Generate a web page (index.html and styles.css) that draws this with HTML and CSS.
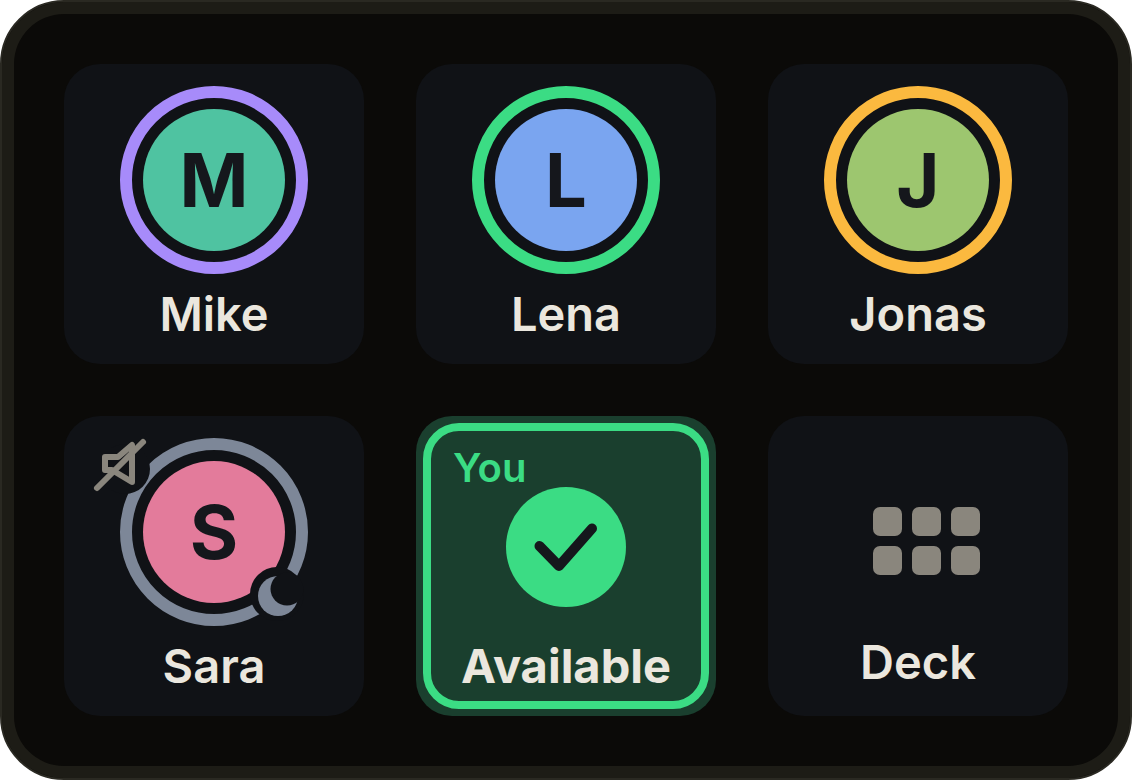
FILE: index.html
```html
<!DOCTYPE html>
<html lang="en">
<head>
    <meta charset="UTF-8">
    <title>Team Deck</title>
    <link rel="stylesheet" href="styles.css">
</head>
<body>
    <div class="frame">
        <div class="tile">
            <div class="avatar ring-purple"><div class="face face-mint">M</div></div>
            <div class="name">Mike</div>
        </div>
        <div class="tile">
            <div class="avatar ring-green"><div class="face face-blue">L</div></div>
            <div class="name">Lena</div>
        </div>
        <div class="tile">
            <div class="avatar ring-amber"><div class="face face-lime">J</div></div>
            <div class="name">Jonas</div>
        </div>
        <div class="tile">
            <div class="avatar ring-slate">
                <div class="face face-pink">S</div>
                <div class="badge-mute">
                    <svg class="mute-icon" width="50" height="50" viewBox="0 0 50 50">
                        <path class="mute-line" d="M5 13H18L32 1V38L12 26H5Z"/>
                        <path class="mute-line" d="M-3 44L43 -2"/>
                    </svg>
                </div>
                <div class="badge-moon">
                    <svg width="54" height="54" viewBox="0 0 54 54">
                        <circle class="moon-disc" cx="28" cy="29" r="20"/>
                        <circle class="moon-bite" cx="37" cy="22" r="16.500"/>
                    </svg>
                </div>
            </div>
            <div class="name">Sara</div>
        </div>
        <div class="tile tile-you">
            <div class="you">You</div>
            <div class="status">
                <svg width="120" height="120" viewBox="0 0 120 120">
                    <path class="check" d="M33.500 59L53 79L86 41.500"/>
                </svg>
            </div>
            <div class="name name-strong">Available</div>
        </div>
        <div class="tile tile-deck">
            <div class="dots">
                <span></span><span></span><span></span>
                <span></span><span></span><span></span>
            </div>
            <div class="name">Deck</div>
        </div>
    </div>
</body>
</html>
```

FILE: styles.css
```css
body {
    margin: 0;
    background-color: #fff;
    font-family: Inter, "Liberation Sans", sans-serif;
}

.frame {
    box-sizing: border-box;
    width: 1132px;
    height: 780px;
    padding: 62px;
    display: grid;
    grid-template-columns: repeat(3, 300px);
    grid-template-rows: repeat(2, 300px);
    gap: 52px;
    background-color: #0b0a08;
    border: 2px solid #2a2922;
    border-radius: 64px;
    box-shadow: inset 0 0 0 12px #1d1c16;
}

.tile {
    position: relative;
    display: flex;
    flex-direction: column;
    align-items: center;
    padding-top: 22px;
    background-color: #101216;
    border-radius: 36px;
}

.avatar {
    position: relative;
    box-sizing: border-box;
    width: 188px;
    height: 188px;
    padding: 11px;
    border: 12px solid;
    border-radius: 50%;
}

.ring-purple { border-color: #a78bfa; }
.ring-green { border-color: #3bdc84; }
.ring-amber { border-color: #fbb93f; }
.ring-slate { border-color: #7d8798; }

.face {
    width: 142px;
    height: 142px;
    border-radius: 50%;
    display: flex;
    align-items: center;
    justify-content: center;
    font-size: 74px;
    font-weight: 700;
    color: #15171c;
}

.face-mint { background-color: #4fc3a1; }
.face-blue { background-color: #7aa5f0; }
.face-lime { background-color: #9dc66f; }
.face-pink { background-color: #e37b9b; }

.name {
    margin-top: 11px;
    font-size: 47px;
    line-height: 58px;
    font-weight: 600;
    color: #ebe7de;
}

.badge-mute {
    position: absolute;
    left: -32px;
    top: -6px;
    width: 50px;
    height: 50px;
    border-radius: 50%;
    background-color: #101216;
}

.mute-icon {
    overflow: visible;
}

.mute-line {
    fill: none;
    stroke: #8a867d;
    stroke-width: 6;
    stroke-linecap: round;
    stroke-linejoin: round;
}

.badge-moon {
    position: absolute;
    left: 118px;
    top: 117px;
    width: 54px;
    height: 54px;
    border-radius: 50%;
    background-color: #101216;
}

.moon-disc { fill: #7d8798; }
.moon-bite { fill: #101216; }

.tile-you {
    background-color: #1a3f2e;
    padding-top: 71px;
}

.tile-you::before {
    content: "";
    position: absolute;
    inset: 7px;
    border: 8px solid #3bdc84;
    border-radius: 36px;
}

.you {
    position: absolute;
    left: 37px;
    top: 28px;
    font-size: 40px;
    line-height: 48px;
    font-weight: 600;
    color: #3bdc84;
}

.status {
    width: 120px;
    height: 120px;
    border-radius: 50%;
    background-color: #3bdc84;
}

.check {
    fill: none;
    stroke: #15171c;
    stroke-width: 10;
    stroke-linecap: round;
    stroke-linejoin: round;
}

.name-strong {
    margin-top: 30px;
    font-weight: 700;
}

.tile-deck {
    padding-top: 91px;
}

.dots {
    display: grid;
    grid-template-columns: repeat(3, 29px);
    grid-auto-rows: 29px;
    gap: 10px;
    margin-left: 17px;
}

.dots span {
    background-color: #8a867d;
    border-radius: 7px;
}

.tile-deck .name {
    margin-top: 58px;
}
```
